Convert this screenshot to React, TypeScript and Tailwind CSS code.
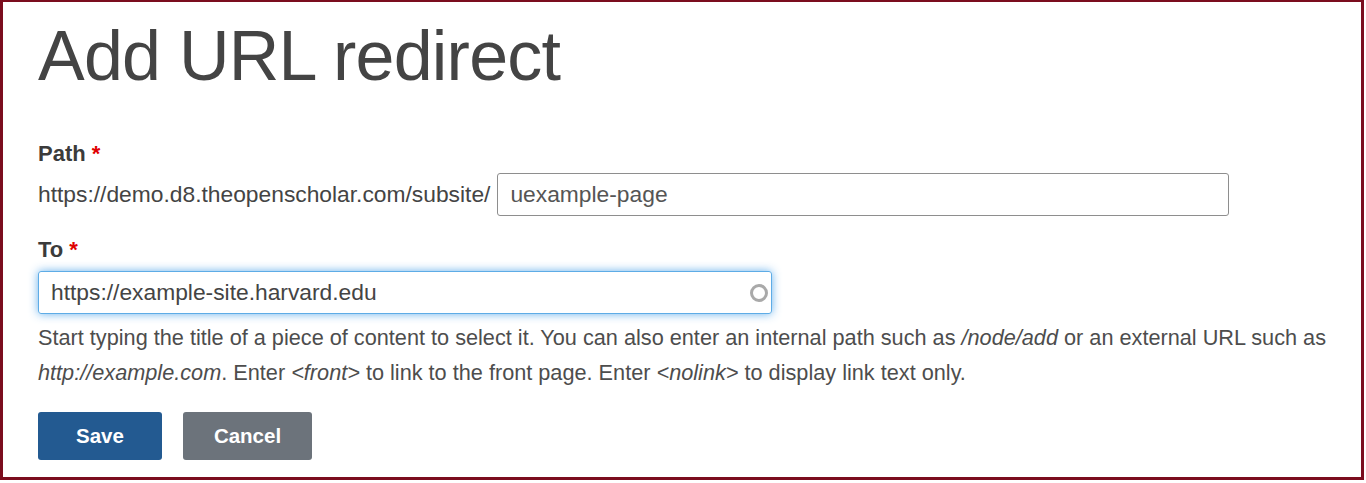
import React from "react"

const font = { fontFamily: '"Liberation Sans", Arial, sans-serif' }

function Required() {
  return <span className="text-[#e00000]"> *</span>
}

export default function App() {
  return (
    <div className="w-[1366px] h-[483px] bg-white" style={font}>
      <div className="w-[1364px] h-[480px] border-t-2 border-x-[3px] border-b-[3px] border-[#7b0d1e] pl-[35px] pt-[14px]">
        <h1 className="text-[70px] leading-[80px] tracking-[-0.75px] text-[#444]">Add URL redirect</h1>

        <label className="block mt-[44px] text-[22px] leading-[28px] font-bold text-[#3b3b3b]">
          Path
          <Required />
        </label>
        <div className="mt-[5px] flex items-center gap-[7px] h-[43px]">
          <span className="text-[22.8px] text-[#444]">https://demo.d8.theopenscholar.com/subsite/</span>
          <div className="w-[732px] h-[43px] border border-[#8e8e8e] rounded-[3px] flex items-center px-[12px] text-[22.8px] text-[#555]">
            uexample-page
          </div>
        </div>

        <label className="block mt-[20px] text-[22px] leading-[28px] font-bold text-[#3b3b3b]">
          To
          <Required />
        </label>
        <div className="mt-[7px] w-[734px] h-[43px] border border-[#5eace6] rounded-[3px] shadow-[0_0_10px_rgba(90,170,235,0.9)] flex items-center justify-between pl-[12px] pr-[2px] text-[22.8px] text-[#444]">
          <span>https://example-site.harvard.edu</span>
          <svg width="20" height="20" viewBox="0 0 20 20">
            <circle cx="10" cy="10" r="7.5" fill="none" stroke="#a9a9a9" strokeWidth="3" />
          </svg>
        </div>

        <p className="mt-[6px] w-[1300px] text-[21.7px] leading-[35px] text-[#4d4d4d]">
          Start typing the title of a piece of content to select it. You can also enter an internal path such as{" "}
          <em>/node/add</em> or an external URL such as <em>http://example.com</em>. Enter <em>&lt;front&gt;</em> to
          link to the front page. Enter <em>&lt;nolink&gt;</em> to display link text only.
        </p>

        <div className="mt-[22px] flex gap-[21px]">
          <button className="w-[124px] h-[48px] rounded-[3px] bg-[#235a91] text-white text-[20.5px] font-bold">
            Save
          </button>
          <button className="w-[129px] h-[48px] rounded-[3px] bg-[#6c737b] text-white text-[20.5px] font-bold">
            Cancel
          </button>
        </div>
      </div>
    </div>
  )
}
